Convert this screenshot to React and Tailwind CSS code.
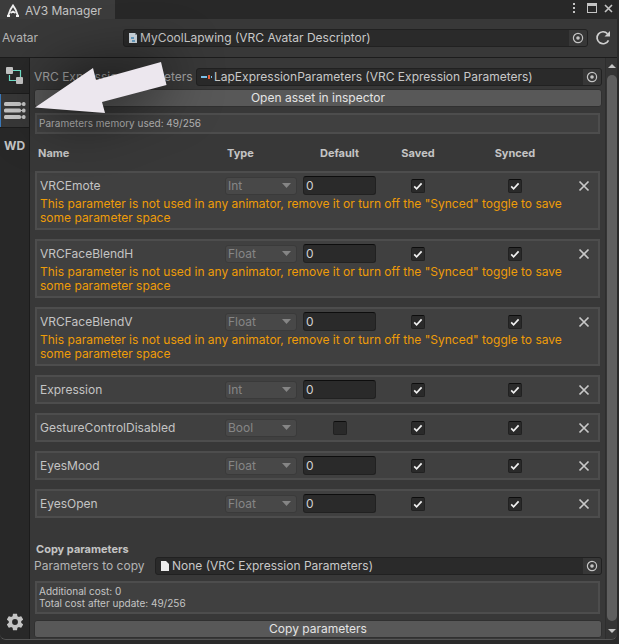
import { useState } from 'react';

const initialParams = [
  { name: 'VRCEmote', type: 'Int', value: '0', unused: true },
  { name: 'VRCFaceBlendH', type: 'Float', value: '0', unused: true },
  { name: 'VRCFaceBlendV', type: 'Float', value: '0', unused: true },
  { name: 'Expression', type: 'Int', value: '0' },
  { name: 'GestureControlDisabled', type: 'Bool', value: false },
  { name: 'EyesMood', type: 'Float', value: '0' },
  { name: 'EyesOpen', type: 'Float', value: '0' },
].map(p => ({ ...p, saved: true, synced: true }));

function AvatarFileIcon() {
  return (
    <svg className="shrink-0" width="10" height="12" viewBox="0 0 10 12">
      <path d="M1 1h6l2 2v8H1z" fill="#d3dce3" />
      <path d="M7 1v2h2z" fill="#8b969e" />
      <path d="M3 5h3v2H3zM4 8h3v2H4z" fill="#6ba3c9" />
    </svg>
  );
}

function SliderFileIcon() {
  return (
    <svg className="shrink-0" width="11" height="12" viewBox="0 0 11 12">
      <path d="M0 5h6v2H0z" fill="#7cc4ee" />
      <path d="M7 4h2v4H7z" fill="#e8603c" />
      <path d="M10 5h1v2h-1z" fill="#7cc4ee" />
    </svg>
  );
}

function BlankFileIcon() {
  return (
    <svg className="shrink-0" width="10" height="12" viewBox="0 0 10 12">
      <path d="M1 1h5l3 3v7H1z" fill="#ececec" />
    </svg>
  );
}

function ObjectField({ id, icon, value }) {
  return (
    <div className="flex h-[18px] min-w-0 flex-1 items-center rounded-[3px] border border-[#212121] bg-[#2a2a2a] pl-1">
      {icon}
      <input id={id} readOnly value={value} className="min-w-0 flex-1 bg-transparent px-[2px] leading-4 text-[#c8c8c8] outline-none" />
      <button type="button" aria-label="Select object" className="flex h-4 w-[18px] items-center justify-center rounded-r-[2px] bg-[#373737]">
        <svg width="12" height="12" viewBox="0 0 12 12">
          <circle cx="6" cy="6" r="4.6" fill="none" stroke="#c4c4c4" strokeWidth="1.2" />
          <circle cx="6" cy="6" r="1.8" fill="#c4c4c4" />
        </svg>
      </button>
    </div>
  );
}

function Toggle({ label, checked, onChange }) {
  return (
    <span className="relative block h-[14px] w-[14px]">
      <input
        type="checkbox"
        aria-label={label}
        checked={checked}
        onChange={onChange}
        className="block h-[14px] w-[14px] appearance-none rounded-[2px] border border-[#212121] border-t-[#0d0d0d] bg-[#2a2a2a]"
      />
      {checked && (
        <svg className="pointer-events-none absolute inset-0" width="14" height="14" viewBox="0 0 14 14">
          <path d="M3.200 7.400l2.400 2.400 5-5.400" fill="none" stroke="#f0f0f0" strokeWidth="1.700" />
        </svg>
      )}
    </span>
  );
}

const rowGrid = 'grid grid-cols-[minmax(0,1fr)_78px_73px_84px_110px_28px] items-center';

function ParamRow({ param, onChange, onRemove }) {
  return (
    <tbody className="mb-[9px] block border-2 border-[#4d4d4d] bg-[#404040] py-[3px] pl-[3px]">
      <tr className={rowGrid}>
        <td className="truncate">{param.name}</td>
        <td className="relative">
          <select disabled aria-label={`${param.name} type`} value={param.type} className="block h-[18px] w-[72px] appearance-none rounded-[3px] border border-[#3a3a3a] bg-[#484848] pl-[2px] leading-4 text-[#868686] opacity-100">
            <option>Int</option>
            <option>Float</option>
            <option>Bool</option>
          </select>
          <svg className="pointer-events-none absolute top-[6px] left-[57px]" width="9" height="5" viewBox="0 0 9 5">
            <path d="M0 0h9L4.500 5z" fill="#858585" />
          </svg>
        </td>
        <td className="flex h-[19px] items-center justify-center">
          {param.type === 'Bool' ? (
            <Toggle label={`${param.name} default`} checked={param.value} onChange={e => onChange({ value: e.target.checked })} />
          ) : (
            <input
              aria-label={`${param.name} default`}
              value={param.value}
              onChange={e => onChange({ value: e.target.value })}
              className="h-[19px] w-full rounded-[3px] border border-[#212121] border-t-[#0d0d0d] bg-[#2a2a2a] px-[2px] text-[#d2d2d2] outline-none"
            />
          )}
        </td>
        <td className="flex justify-center">
          <Toggle label={`${param.name} saved`} checked={param.saved} onChange={e => onChange({ saved: e.target.checked })} />
        </td>
        <td className="flex justify-center">
          <Toggle label={`${param.name} synced`} checked={param.synced} onChange={e => onChange({ synced: e.target.checked })} />
        </td>
        <td className="flex justify-center">
          <button type="button" aria-label={`Remove ${param.name}`} onClick={onRemove}>
            <svg width="12" height="12" viewBox="0 0 12 12">
              <path d="M1.500 1.500l9 9M10.500 1.500l-9 9" stroke="#c8c8c8" strokeWidth="1.700" />
            </svg>
          </button>
        </td>
      </tr>
      {param.unused && (
        <tr className="block">
          <td colSpan={6} className="block pt-[2px] pr-6 leading-[14px] text-[#ee9c08]">
            This parameter is not used in any animator, remove it or turn off the "Synced" toggle to save some parameter space
          </td>
        </tr>
      )}
    </tbody>
  );
}

function Sidebar() {
  return (
    <nav className="flex w-[30px] shrink-0 flex-col border-r border-[#1c1c1c] bg-[#282828]">
      <button type="button" aria-label="Animators" className="flex h-9 items-center justify-center border-b border-[#1c1c1c]">
        <svg width="18" height="18" viewBox="0 0 18 18">
          <path d="M7 3.500h7.500V10M3.500 8v5.500h7" fill="none" stroke="#6fe0c8" strokeWidth="1.200" />
          <rect x="0" y="0" width="7" height="7" rx="1" fill="#c4c4c4" />
          <rect x="10" y="10" width="7" height="7" rx="1" fill="#c4c4c4" />
        </svg>
      </button>
      <button type="button" aria-label="Parameters" className="flex h-[33px] items-center border-l border-[#3a79bb] bg-[#383838] pl-[3px]">
        <svg width="22" height="19" viewBox="0 0 22 19" fill="#c4c4c4">
          {[3, 9.5, 16].map(y => (
            <g key={y}>
              <rect x="0" y={y - 2} width="17" height="4" rx="1.500" />
              <rect x="16" y={y - 0.5} width="3" height="1" />
              <rect x="18" y={y - 2} width="3.500" height="4" rx="1.500" />
            </g>
          ))}
        </svg>
      </button>
      <button type="button" className="h-9 border-t border-[#1c1c1c] text-[12px] font-bold text-[#c4c4c4]">WD</button>
      <button type="button" aria-label="Settings" className="mt-auto mb-[7px] flex h-5 items-center justify-center">
        <svg width="20" height="20" viewBox="0 0 24 24" fill="#c4c4c4">
          <path d="M19.430 12.980c.04-.32.07-.64.07-.98s-.03-.66-.07-.98l2.110-1.650c.19-.15.24-.42.12-.64l-2-3.460c-.12-.22-.39-.3-.61-.22l-2.490 1c-.52-.4-1.080-.73-1.690-.98l-.38-2.650C14.460 2.180 14.250 2 14 2h-4c-.25 0-.46.18-.49.42l-.38 2.650c-.61.25-1.170.59-1.690.98l-2.490-1c-.23-.09-.49 0-.61.22l-2 3.460c-.13.22-.07.49.12.64l2.110 1.650c-.04.32-.07.65-.07.98s.03.66.07.98l-2.110 1.650c-.19.15-.24.42-.12.64l2 3.460c.12.22.39.3.61.22l2.490-1c.52.4 1.080.73 1.690.98l.38 2.650c.03.24.24.42.49.42h4c.25 0 .46-.18.49-.42l.38-2.650c.61-.25 1.170-.59 1.690-.98l2.490 1c.23.09.49 0 .61-.22l2-3.460c.12-.22.07-.49-.12-.64zM12 15.500a3.500 3.500 0 110-7 3.500 3.500 0 010 7z" />
        </svg>
      </button>
    </nav>
  );
}

export default function App() {
  const [params, setParams] = useState(initialParams);

  const update = (name, patch) =>
    setParams(params.map(p => (p.name === name ? { ...p, ...patch } : p)));

  const remove = name => setParams(params.filter(p => p.name !== name));

  return (
    <div className="relative min-h-screen bg-[#2a2a2a] pr-[2px] font-['Inter',sans-serif] text-[12px] leading-4 text-[#c4c4c4]">
      <div className="overflow-hidden rounded-b-[6px] border-b border-[#555555] bg-[#383838]">
        {/* Tab bar */}
        <header className="flex h-[19px] items-center bg-[#282828]">
          <h1 className="flex h-full w-[115px] items-center gap-[5px] bg-[#3c3c3c] pt-[2px] pl-[6px]">
            <svg width="14" height="14" viewBox="0 0 14 14" fill="none" stroke="#f0f0f0" strokeWidth="1.800">
              <path d="M2 12L4.500 5.500 7 1.500l2.500 4L12 12" />
              <path d="M4.500 9L7 7.500 9.500 9" />
              <path d="M1 12h3M10 12h3" />
            </svg>
            AV3 Manager
          </h1>
          <div className="ml-auto flex items-center gap-[7px] pr-1 pb-[3px]">
            <button type="button" aria-label="Menu">
              <svg width="4" height="12" viewBox="0 0 4 12" fill="#c4c4c4">
                <path d="M1 1h2v2H1zM1 5h2v2H1zM1 9h2v2H1z" />
              </svg>
            </button>
            <button type="button" aria-label="Maximize" className="pl-1">
              <svg width="10" height="10" viewBox="0 0 10 10">
                <rect x="0.500" y="0.500" width="9" height="9" fill="none" stroke="#c4c4c4" />
                <path d="M0 0h10v3H0z" fill="#c4c4c4" />
              </svg>
            </button>
            <button type="button" aria-label="Close">
              <svg width="9" height="9" viewBox="0 0 9 9">
                <path d="M1 1l7 7M8 1L1 8" stroke="#c4c4c4" strokeWidth="1.600" />
              </svg>
            </button>
          </div>
        </header>

        {/* Avatar */}
        <div className="flex h-[39px] items-center gap-[7px] border-b border-[#1c1c1c] pr-[6px] pl-[2px]">
          <label htmlFor="avatar" className="w-[114px] text-[#b4b4b4]">Avatar</label>
          <ObjectField id="avatar" icon={<AvatarFileIcon />} value="MyCoolLapwing (VRC Avatar Descriptor)" />
          <button type="button" aria-label="Refresh">
            <svg width="16" height="16" viewBox="0 0 16 16">
              <path d="M13.500 10.300a6 6 0 11-1-6.600" fill="none" stroke="#d0d0d0" strokeWidth="1.700" />
              <path d="M15 1v5.500H9.500z" fill="#d0d0d0" />
            </svg>
          </button>
        </div>

        <div className="flex">
          <Sidebar />

          <main className="min-w-0 flex-1 pt-[10px] pr-[3px] pb-px pl-1">
            <div className="flex items-center gap-1">
              <label htmlFor="asset" className="w-[158px] whitespace-nowrap text-[#a4a4a4]">VRC Expression Parameters</label>
              <ObjectField id="asset" icon={<SliderFileIcon />} value="LapExpressionParameters (VRC Expression Parameters)" />
            </div>
            <button type="button" className="mt-[3px] block h-[18px] w-full rounded-[3px] border border-[#303030] bg-[#585858] leading-4 text-[#e4e4e4]">
              Open asset in inspector
            </button>

            <div className="mr-[2px] ml-px">
              <p className="mt-[6px] border-2 border-[#4d4d4d] bg-[#404040] px-[2px] pb-px text-[10px] text-[#b4b4b4]">
                Parameters memory used: 49/256
              </p>

              <table className="block text-left">
                <thead className="block px-[2px]">
                  <tr className={`${rowGrid} h-[37px] pl-px text-[11px]`}>
                    <th>Name</th>
                    <th className="pl-[2px]">Type</th>
                    <th className="text-center">Default</th>
                    <th className="text-center">Saved</th>
                    <th className="text-center">Synced</th>
                    <th aria-label="Remove" />
                  </tr>
                </thead>
                {params.map(p => (
                  <ParamRow
                    key={p.name}
                    param={p}
                    onChange={patch => update(p.name, patch)}
                    onRemove={() => remove(p.name)}
                  />
                ))}
              </table>
            </div>

            <h2 className="mt-[23px] pl-[2px] text-[11px] font-bold">Copy parameters</h2>
            <div className="flex items-center gap-1">
              <label htmlFor="copy" className="w-[117px] whitespace-nowrap text-[#b4b4b4]">Parameters to copy</label>
              <ObjectField id="copy" icon={<BlankFileIcon />} value="None (VRC Expression Parameters)" />
            </div>
            <div className="mt-[6px] mr-[2px] ml-px border-2 border-[#4d4d4d] bg-[#404040] px-[2px] pt-[2px] pb-[3px] text-[10px] leading-[12px]">
              <p>Additional cost: 0</p>
              <p>Total cost after update: 49/256</p>
            </div>
            <button type="button" className="mt-[6px] block h-[18px] w-full rounded-[3px] border border-[#303030] bg-[#585858] leading-4 text-[#e4e4e4]">
              Copy parameters
            </button>
          </main>

          {/* Scrollbar */}
          <div className="flex w-3 shrink-0 flex-col items-center border-l border-[#2e2e2e] bg-[#353535]">
            <svg className="my-[5px]" width="8" height="7" viewBox="0 0 8 7">
              <path d="M0 5l4-4 4 4z" fill="#c4c4c4" />
            </svg>
            <div className="w-[10px] flex-1 rounded-full bg-[#5f5f5f]" />
            <svg className="mt-[7px] mb-[5px]" width="8" height="6" viewBox="0 0 8 6">
              <path d="M0 1h8L4 5z" fill="#c4c4c4" />
            </svg>
          </div>
        </div>
      </div>

      {/* Pointer to the parameters tab */}
      <svg className="pointer-events-none absolute top-0 left-0 overflow-visible drop-shadow-[0_0_28px_rgba(0,0,0,0.9)]" width="170" height="120" viewBox="0 0 170 120">
        <path d="M35 107.500L93 68l3 12 65-18 5.500 23L102 102l3 11z" fill="#ece7ee" />
      </svg>
    </div>
  );
}
